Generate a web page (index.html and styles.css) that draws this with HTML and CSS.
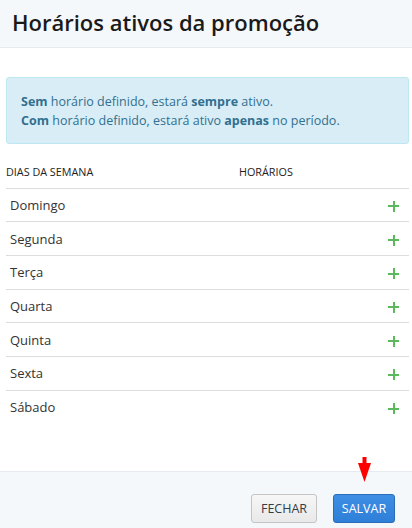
FILE: index.html
```html
<!DOCTYPE html>
<html lang="pt">
<head>
<meta charset="utf-8">
<link rel="stylesheet" href="styles.css">
</head>
<body>
<div class="modal">
  <header class="modal-header">
    <h1 class="title">Horários ativos da promoção</h1>
  </header>
  <div class="modal-body">
    <div class="alert">
      <div><b>Sem</b> horário definido, estará <b>sempre</b> ativo.</div>
      <div><b>Com</b> horário definido, estará ativo <b>apenas</b> no período.</div>
    </div>
    <table class="days">
      <thead>
        <tr><th class="c-day">DIAS DA SEMANA</th><th class="c-hours">HORÁRIOS</th><th class="c-add"></th></tr>
      </thead>
      <tbody>
        <tr><td>Domingo</td><td></td><td class="c-add"><span class="plus"></span></td></tr>
        <tr><td>Segunda</td><td></td><td class="c-add"><span class="plus"></span></td></tr>
        <tr><td>Terça</td><td></td><td class="c-add"><span class="plus"></span></td></tr>
        <tr><td>Quarta</td><td></td><td class="c-add"><span class="plus"></span></td></tr>
        <tr><td>Quinta</td><td></td><td class="c-add"><span class="plus"></span></td></tr>
        <tr><td>Sexta</td><td></td><td class="c-add"><span class="plus"></span></td></tr>
        <tr><td>Sábado</td><td></td><td class="c-add"><span class="plus"></span></td></tr>
      </tbody>
    </table>
  </div>
  <footer class="modal-footer">
    <button class="btn btn-default">FECHAR</button>
    <div class="save-wrap">
      <svg class="arrow" width="13" height="25" viewBox="0 0 13 25"><rect x="4.5" y="0" width="4" height="8" fill="#f00"/><polygon points="0,6 13,6 6.5,25" fill="#f00"/></svg>
      <button class="btn btn-primary">SALVAR</button>
    </div>
  </footer>
</div>
</body>
</html>
```

FILE: styles.css
```css
html, body {
  margin: 0;
  padding: 0;
  background: #fff;
}
*, *::before, *::after { box-sizing: border-box; }
body {
  font-family: "Segoe UI", "Open Sans", "Noto Sans", sans-serif;
  color: #333;
}
.modal {
  width: 412px;
  height: 528px;
  display: flex;
  flex-direction: column;
}
.modal-header {
  height: 48px;
  background: #f5f8fb;
  border-bottom: 1px solid #e6eaef;
  display: flex;
  align-items: center;
  padding: 0 0 3px 12px;
  flex-shrink: 0;
}
.title {
  margin: 0;
  font-size: 22px;
  font-weight: 600;
  color: #1a1a1a;
  letter-spacing: 0;
}
.modal-body {
  flex: 1;
  padding: 29px 3px 0 6px;
}
.alert {
  background: #d9edf7;
  border: 1px solid #bce8f1;
  border-radius: 3px;
  color: #31708f;
  font-size: 12.5px;
  line-height: 19px;
  padding: 14px 14px 13px;
}
.alert b {
  font-weight: 700;
}
.days {
  width: 100%;
  border-collapse: collapse;
  margin-top: 20px;
}
.days th {
  text-align: left;
  font-weight: 400;
  font-size: 10.8px;
  color: #222;
  padding: 0 0 8px 0;
  height: 24px;
}
.c-day { width: 233px; }
.days td {
  border-top: 1px solid #ddd;
  height: 33.7px;
  padding: 0 4px;
  font-size: 13px;
  color: #333;
}
.c-add { width: 20px; text-align: right; }
.days td.c-add { padding-right: 10px; }
.plus {
  display: inline-block;
  position: relative;
  width: 11px;
  height: 11px;
  vertical-align: middle;
}
.plus::before, .plus::after {
  content: "";
  position: absolute;
  background: #5cb85c;
}
.plus::before { left: 0; top: 4.5px; width: 11px; height: 2px; }
.plus::after { top: 0; left: 4.5px; width: 2px; height: 11px; }
.modal-footer {
  height: 57px;
  background: #f5f8fb;
  border-top: 1px solid #e6eaef;
  display: flex;
  justify-content: flex-end;
  align-items: flex-end;
  gap: 16px;
  padding: 0 17px 5px 0;
  flex-shrink: 0;
}
.save-wrap {
  display: flex;
  flex-direction: column;
  align-items: center;
}
.arrow {
  display: block;
  margin-bottom: 12px;
}
.btn {
  height: 29px;
  font-family: inherit;
  font-size: 12.5px;
  border-radius: 3px;
  padding: 0;
  cursor: pointer;
}
.btn-default {
  width: 66px;
  background: linear-gradient(#f6f6f6, #e9e9e9);
  border: 1px solid #c4c4c4;
  color: #333d47;
}
.btn-primary {
  width: 62px;
  background: linear-gradient(#3d8ee5, #2f7fd8);
  border: 1px solid #2a6cb8;
  color: #fff;
}
```
